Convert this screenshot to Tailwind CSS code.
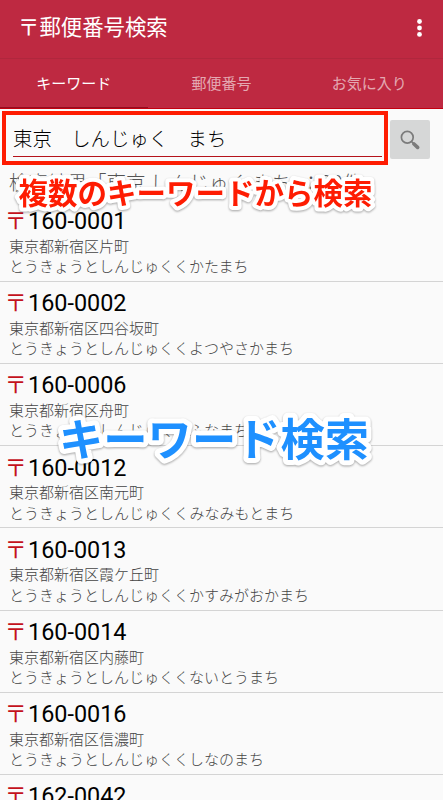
<!DOCTYPE html>
<html lang="ja">
<head>
  <meta charset="UTF-8">
  <meta name="viewport" content="width=device-width, initial-scale=1.0">
  <title>〒郵便番号検索</title>
  <script src="https://cdn.jsdelivr.net/npm/@tailwindcss/browser@4"></script>
</head>
<body class="relative h-[800px] overflow-hidden bg-[#fafafa] font-['Roboto','Noto_Sans_CJK_JP',sans-serif]">
  <!-- App bar -->
  <header class="h-[109px] bg-[#be2941] border-b border-[#c40010] text-white">
    <div class="flex h-[59px] items-center justify-between border-b border-[#b0273d] pb-[3px] pl-[18px] pr-[21.5px]">
      <h1 class="text-[21.4px] leading-none">〒郵便番号検索</h1>
      <svg class="w-[5px] h-[18px]" viewBox="0 0 5 18" fill="currentColor">
        <circle cx="2.5" cy="2.5" r="2.4"/><circle cx="2.5" cy="9" r="2.4"/><circle cx="2.5" cy="15.4" r="2.4"/>
      </svg>
    </div>
    <nav class="grid h-[49px] grid-cols-3 text-center text-[15px] leading-[50px]">
      <a class="h-[49px] border-b border-[#940d22]">キーワード</a>
      <a class="text-white/60">郵便番号</a>
      <a class="text-white/60">お気に入り</a>
    </nav>
  </header>

  <!-- Search box -->
  <div class="flex pt-[2px] pl-[2px] gap-[2px]">
    <div class="h-[54px] w-[386px] border-4 border-[#fe1c02] pl-[7px] pr-[2px]">
      <div class="h-[42px] border-b border-[#b5121b] text-[19.4px] leading-[50px] font-light text-black whitespace-pre">東京　しんじゅく　まち</div>
    </div>
    <button class="mt-[9px] flex h-[39px] w-10 items-center justify-center rounded-xs bg-[#d6d7d7]">
      <svg class="size-5" viewBox="0 0 20 20" fill="none" stroke="#7b7b7b">
        <circle cx="7.3" cy="7.3" r="5.9" stroke-width="1.7"/>
        <path d="M11.5 11.5l2.5 2.5" stroke-width="1.7"/>
        <path d="M14 14l3.6 3.4" stroke-width="3.6" stroke-linecap="round"/>
      </svg>
    </button>
  </div>
  <p class="h-[34.6px] pl-[9px] text-[19.5px] leading-[38px] font-light text-[#555] whitespace-pre">検索結果「東京 しんじゅく まち」：23件</p>

  <!-- Results -->
  <ul id="results"></ul>

  <!-- Captions -->
  <svg class="absolute inset-0 size-full drop-shadow-[0_1px_1px_rgba(0,0,0,0.35)] font-['Noto_Sans_CJK_JP',sans-serif] font-bold" viewBox="0 0 443 800" stroke-linejoin="round" paint-order="stroke">
    <g fill="#fe1c02" font-size="29.5" stroke="#fff" stroke-width="8">
      <text x="18.5" y="204">複数のキーワードから検索</text>
    </g>
    <g fill="#1e90ff" font-size="44.3" stroke="#fff" stroke-width="10">
      <text x="59" y="456">キーワード検索</text>
    </g>
  </svg>

  <script>
    const results = [
      ['160-0001', '東京都新宿区片町', 'とうきょうとしんじゅくくかたまち'],
      ['160-0002', '東京都新宿区四谷坂町', 'とうきょうとしんじゅくくよつやさかまち'],
      ['160-0006', '東京都新宿区舟町', 'とうきょうとしんじゅくくふなまち'],
      ['160-0012', '東京都新宿区南元町', 'とうきょうとしんじゅくくみなみもとまち'],
      ['160-0013', '東京都新宿区霞ケ丘町', 'とうきょうとしんじゅくくかすみがおかまち'],
      ['160-0014', '東京都新宿区内藤町', 'とうきょうとしんじゅくくないとうまち'],
      ['160-0016', '東京都新宿区信濃町', 'とうきょうとしんじゅくくしなのまち'],
      ['162-0042', '', ''],
    ];
    document.getElementById('results').innerHTML = results.map(([code, address, kana]) => `
      <li class="h-[82.2px] border-b border-[#d4d4d4] pt-[7.4px] pl-[9px] text-[15px] leading-[20.5px] font-light text-[#444]">
        <div class="-ml-[4.5px] mb-[0.6px] flex h-[29px] items-center text-[23.4px] leading-[29px] font-normal text-black"><span class="w-[23.5px] text-[22.4px] text-[#c4121c]">〒</span>${code}</div>
        <div>${address}</div>
        <div>${kana}</div>
      </li>`).join('');
  </script>
</body>
</html>
